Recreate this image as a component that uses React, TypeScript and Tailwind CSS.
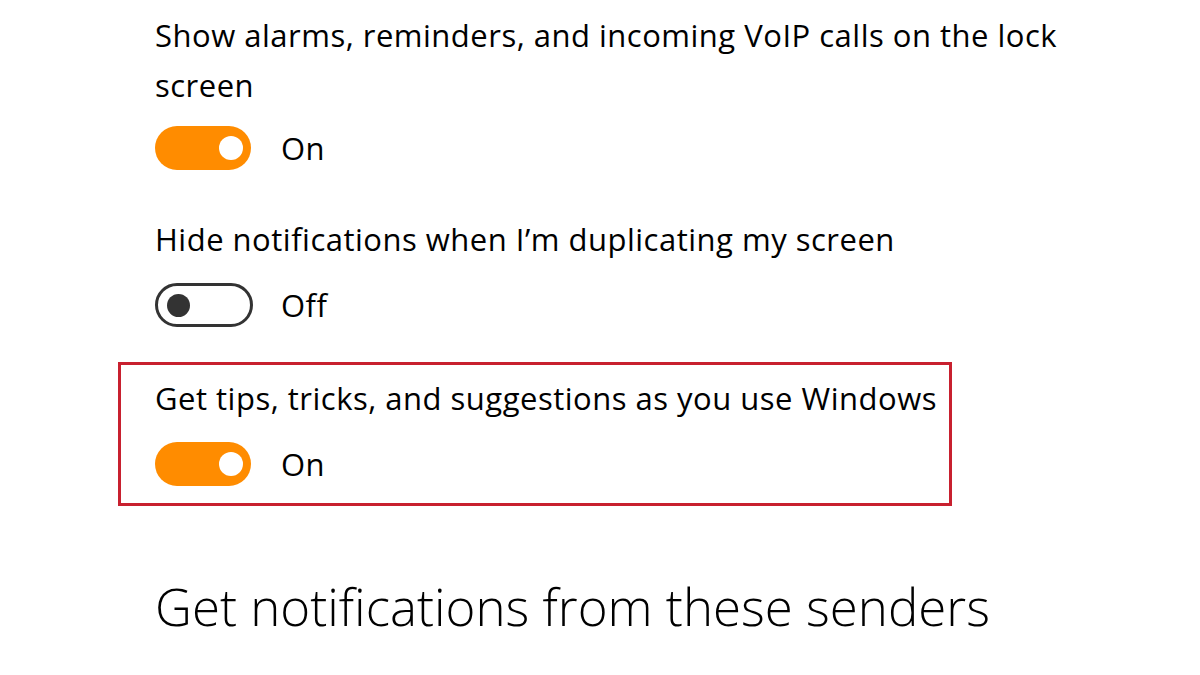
import React from "react";

const font = { fontFamily: '"Open Sans", "Noto Sans", "Liberation Sans", sans-serif' };

function Toggle({ on }: { on: boolean }) {
  if (on) {
    return (
      <div className="flex h-[44px] w-[96px] items-center justify-end rounded-full bg-[#ff8c00] pr-[8px]">
        <div className="h-[24px] w-[24px] rounded-full bg-white" />
      </div>
    );
  }
  return (
    <div className="flex h-[44px] w-[98px] items-center rounded-full border-[3px] border-[#333333] bg-white pl-[9px]">
      <div className="h-[23px] w-[23px] rounded-full bg-[#333333]" />
    </div>
  );
}

function ToggleRow({ on }: { on: boolean }) {
  return (
    <div className="flex items-center gap-[28px]">
      <div className="w-[98px]">
        <Toggle on={on} />
      </div>
      <span className="text-[31px] leading-[44px] tracking-[0.5px] text-black">{on ? "On" : "Off"}</span>
    </div>
  );
}

export default function App() {
  return (
    <div className="h-[675px] w-[1200px] overflow-hidden bg-white text-black" style={font}>
      <div className="pl-[118px] pt-[10px]">
        <div className="pl-[37px]">
          <p className="w-[920px] text-[31px] leading-[50px] tracking-[0.5px]">
            Show alarms, reminders, and incoming VoIP calls on the lock screen
          </p>
          <div className="mt-[16px]">
            <ToggleRow on={true} />
          </div>
          <p className="mt-[44px] text-[31px] leading-[50px] tracking-[0.5px]">
            Hide notifications when I’m duplicating my screen
          </p>
          <div className="mt-[19px]">
            <ToggleRow on={false} />
          </div>
        </div>
        <div className="mt-[35px] w-[834px] border-[3px] border-[#c8202f] pb-[17px] pl-[34px] pt-[8px]">
          <p className="text-[31px] leading-[50px] tracking-[0.5px]">
            Get tips, tricks, and suggestions as you use Windows
          </p>
          <div className="mt-[19px]">
            <ToggleRow on={true} />
          </div>
        </div>
        <h2 className="mt-[70px] pl-[37px] text-[51px] font-light leading-[60px]">
          Get notifications from these senders
        </h2>
      </div>
    </div>
  );
}
